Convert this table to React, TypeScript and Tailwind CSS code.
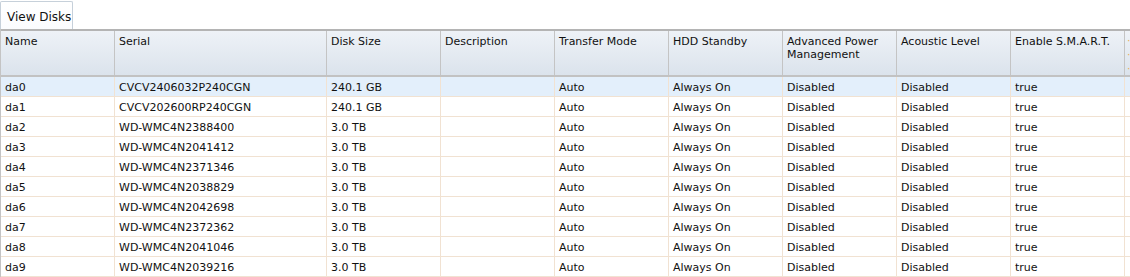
import React from 'react';

const columns = [
  { label: 'Name', w: 'w-[114px]' },
  { label: 'Serial', w: 'w-[212px]' },
  { label: 'Disk Size', w: 'w-[114px]' },
  { label: 'Description', w: 'w-[114px]' },
  { label: 'Transfer Mode', w: 'w-[114px]' },
  { label: 'HDD Standby', w: 'w-[114px]' },
  { label: 'Advanced Power Management', w: 'w-[114px]' },
  { label: 'Acoustic Level', w: 'w-[114px]' },
  { label: 'Enable S.M.A.R.T.', w: 'w-[114px]' },
];

const disks = [
  ['da0', 'CVCV2406032P240CGN', '240.1 GB'],
  ['da1', 'CVCV202600RP240CGN', '240.1 GB'],
  ['da2', 'WD-WMC4N2388400', '3.0 TB'],
  ['da3', 'WD-WMC4N2041412', '3.0 TB'],
  ['da4', 'WD-WMC4N2371346', '3.0 TB'],
  ['da5', 'WD-WMC4N2038829', '3.0 TB'],
  ['da6', 'WD-WMC4N2042698', '3.0 TB'],
  ['da7', 'WD-WMC4N2372362', '3.0 TB'],
  ['da8', 'WD-WMC4N2041046', '3.0 TB'],
  ['da9', 'WD-WMC4N2039216', '3.0 TB'],
];

export default function App() {
  return (
    <div className="w-[1130px] h-[277px] overflow-hidden bg-white text-[11px] text-[#111] font-['DejaVu_Sans',Verdana,sans-serif]">
      {/* Tab strip */}
      <div className="flex h-[29px] items-end">
        <div className="h-[28px] w-[73px] rounded-t-[2px] border border-b-0 border-[#c6d0da] bg-gradient-to-b from-white to-[#fbfcfe] pl-[6px] pt-[8px] text-[12px] leading-[14px]">
          View Disks
        </div>
      </div>

      {/* Grid */}
      <div className="border-l border-[#c4c4c4]">
        {/* Header */}
        <div className="flex h-[48px] border-t-2 border-b-2 border-t-[#b4b4b4] border-b-[#c2c2c2] bg-gradient-to-b from-[#eef2f7] to-[#dbe3ec]">
          {columns.map((c) => (
            <div key={c.label} className={`${c.w} shrink-0 border-r border-[#c4c4c4] px-[4px] pt-[4px] leading-[13px]`}>
              {c.label}
            </div>
          ))}
          <div className="w-[114px] shrink-0 pl-[2px] pt-[3px] leading-[14px] text-[#e9b15a]">
            <div>·</div>
            <div>·</div>
            <div>·</div>
          </div>
        </div>

        {/* Rows */}
        {disks.map(([name, serial, size], i) => {
          const cells = [name, serial, size, '', 'Auto', 'Always On', 'Disabled', 'Disabled', 'true'];
          return (
            <div
              key={name}
              className={`flex h-[20px] border-b border-[#f1e2d2] ${i === 0 ? 'bg-[#e3effb]' : 'bg-white'}`}
            >
              {cells.map((v, j) => (
                <div
                  key={j}
                  className={`${columns[j].w} shrink-0 border-r border-[#f1e2d2] px-[4px] pt-[4px] leading-[13px] whitespace-nowrap overflow-hidden`}
                >
                  {v}
                </div>
              ))}
              <div className="w-[114px] shrink-0" />
            </div>
          );
        })}
      </div>
    </div>
  );
}
